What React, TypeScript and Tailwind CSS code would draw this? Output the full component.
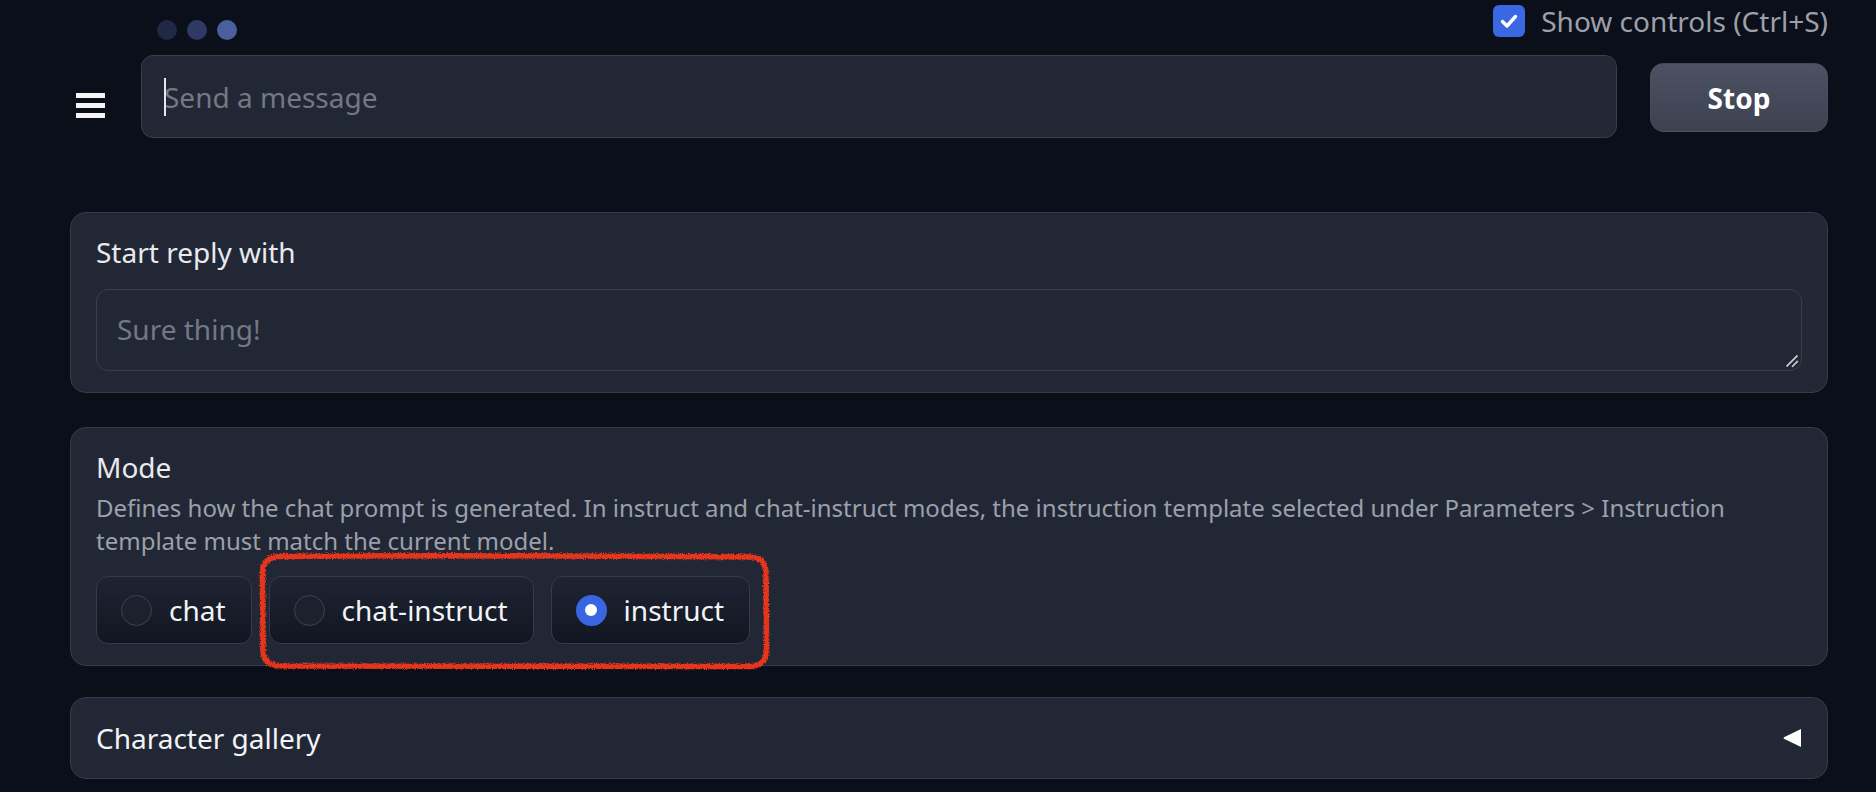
import React from "react";

function RadioOption({ label, checked }: { label: string; checked?: boolean }) {
  return (
    <label className="flex h-[68px] items-center gap-[17px] rounded-[12px] border border-[#363b49] bg-gradient-to-b from-[#1f2433] to-[#121622] pl-[24px] pr-[25px]">
      {checked ? (
        <span className="flex h-[31px] w-[31px] items-center justify-center rounded-full bg-[#3766e0]">
          <span className="h-[12px] w-[12px] rounded-full bg-white" />
        </span>
      ) : (
        <span className="h-[31px] w-[31px] rounded-full border-[1.5px] border-[#3d4352] bg-[#1c212e]" />
      )}
      <span className="text-[28px] leading-[40px] text-[#f3f4f6]">{label}</span>
    </label>
  );
}

export default function App() {
  return (
    <div className="relative h-[792px] w-[1876px] overflow-hidden bg-[#0b0f19] font-['Noto_Sans',sans-serif]">
      {/* header row */}
      <div className="flex h-[55px] items-start">
        <div className="ml-[157px] mt-[20px] flex gap-[10px]">
          <span className="h-[20px] w-[20px] rounded-full bg-[#1f2845]" />
          <span className="h-[20px] w-[20px] rounded-full bg-[#2d3a63]" />
          <span className="h-[20px] w-[20px] rounded-full bg-[#4b5f9f]" />
        </div>
        <label className="ml-auto mr-[48px] mt-[5px] flex items-center gap-[16px]">
          <span className="flex h-[32px] w-[32px] items-center justify-center rounded-[6px] bg-[#3a67e2]">
            <svg width="22" height="22" viewBox="0 0 22 22">
              <path d="M4.5 11.5 L9 16 L17.5 6.5" fill="none" stroke="white" strokeWidth="3.4" strokeLinecap="round" strokeLinejoin="round" />
            </svg>
          </span>
          <span className="text-[28px] leading-[32px] text-[#9ca0aa]">Show controls (Ctrl+S)</span>
        </label>
      </div>

      {/* input row */}
      <div className="flex h-[83px] items-start">
        <button className="ml-[76px] mt-[38px] flex w-[29px] flex-col gap-[5px]">
          <span className="h-[5px] w-full bg-[#f5f5f5]" />
          <span className="h-[5px] w-full bg-[#f5f5f5]" />
          <span className="h-[5px] w-full bg-[#f5f5f5]" />
        </button>
        <div className="relative ml-[36px] h-[83px] w-[1476px] rounded-[12px] border border-[#393e4b] bg-[#222735]">
          <input
            className="h-full w-full bg-transparent pl-[22px] text-[28px] text-[#e5e7eb] outline-none placeholder:text-[#737884]"
            placeholder="Send a message"
          />
          <span className="absolute left-[22px] top-[22px] h-[38px] w-[2px] bg-[#e5e7eb]" />
        </div>
        <button className="ml-[33px] mt-[8px] flex h-[69px] w-[178px] items-center justify-center rounded-[14px] border border-[#50566353] bg-gradient-to-b from-[#4c5263] to-[#3d4251] text-[28px] font-bold text-white">
          Stop
        </button>
      </div>

      {/* blocks */}
      <div className="ml-[70px] mr-[48px] flex flex-col">
        <div className="mt-[74px] rounded-[16px] border border-[#373c4a] bg-[#222735] px-[25px] pb-[21px] pt-[19px]">
          <div className="text-[28px] leading-[40px] text-[#e8eaee]">Start reply with</div>
          <div className="relative mt-[17px]">
            <textarea
              className="block h-[82px] w-full resize-none rounded-[12px] border border-[#393e4b] bg-[#222735] py-[19px] pl-[20px] text-[28px] leading-[40px] text-[#e5e7eb] outline-none placeholder:text-[#737884]"
              placeholder="Sure thing!"
            />
            <svg className="pointer-events-none absolute bottom-[3px] right-[3px]" width="14" height="14" viewBox="0 0 14 14">
              <path d="M1.5 12.5 L12.5 1.5" stroke="#1a1d25" strokeWidth="3.2" />
              <path d="M1.5 12.5 L12.5 1.5" stroke="#bfc3ca" strokeWidth="1.8" />
              <path d="M7 12.8 L12.8 7" stroke="#1a1d25" strokeWidth="3.2" />
              <path d="M7 12.8 L12.8 7" stroke="#bfc3ca" strokeWidth="1.8" />
            </svg>
          </div>
        </div>

        <div className="mt-[34px] rounded-[16px] border border-[#373c4a] bg-[#222735] px-[25px] pb-[21px] pt-[19px]">
          <div className="text-[28px] leading-[40px] text-[#e8eaee]">Mode</div>
          <div className="mt-[4px] text-[24px] leading-[33px] text-[#9ca0ab]">
            Defines how the chat prompt is generated. In instruct and chat-instruct modes, the instruction template selected under Parameters &gt; Instruction template must match the current model.
          </div>
          <div className="mt-[19px] flex gap-[17px]">
            <RadioOption label="chat" />
            <RadioOption label="chat-instruct" />
            <RadioOption label="instruct" checked />
          </div>
        </div>

        <div className="mt-[31px] flex h-[82px] items-center justify-between rounded-[16px] border border-[#373c4a] bg-[#222735] pl-[25px] pr-[26px]">
          <span className="text-[28px] leading-[40px] text-[#f3f4f6]">Character gallery</span>
          <svg width="18" height="18" viewBox="0 0 18 18">
            <path d="M1 8.2 Q0 9 1 9.8 L18 18 L18 0 Z" fill="white" />
          </svg>
        </div>
      </div>

      {/* red hand-drawn annotation */}
      <svg className="pointer-events-none absolute left-0 top-0" width="1876" height="792">
        <defs>
          <filter id="rough" x="-5%" y="-5%" width="110%" height="110%">
            <feTurbulence type="fractalNoise" baseFrequency="0.9" numOctaves="2" seed="3" result="noise" />
            <feDisplacementMap in="SourceGraphic" in2="noise" scale="4.5" xChannelSelector="R" yChannelSelector="G" />
          </filter>
        </defs>
        <path
          d="M279 556.5 C420 555, 600 556, 750 557 Q766 557.5 766 573 L766.5 650 Q766 666 750 666.5 L281 666 Q263 665.5 263 650 L262.5 574 Q262.5 557 279 556.5 Z"
          fill="none"
          stroke="#e5361e"
          strokeWidth="5.5"
          filter="url(#rough)"
        />
      </svg>
    </div>
  );
}
